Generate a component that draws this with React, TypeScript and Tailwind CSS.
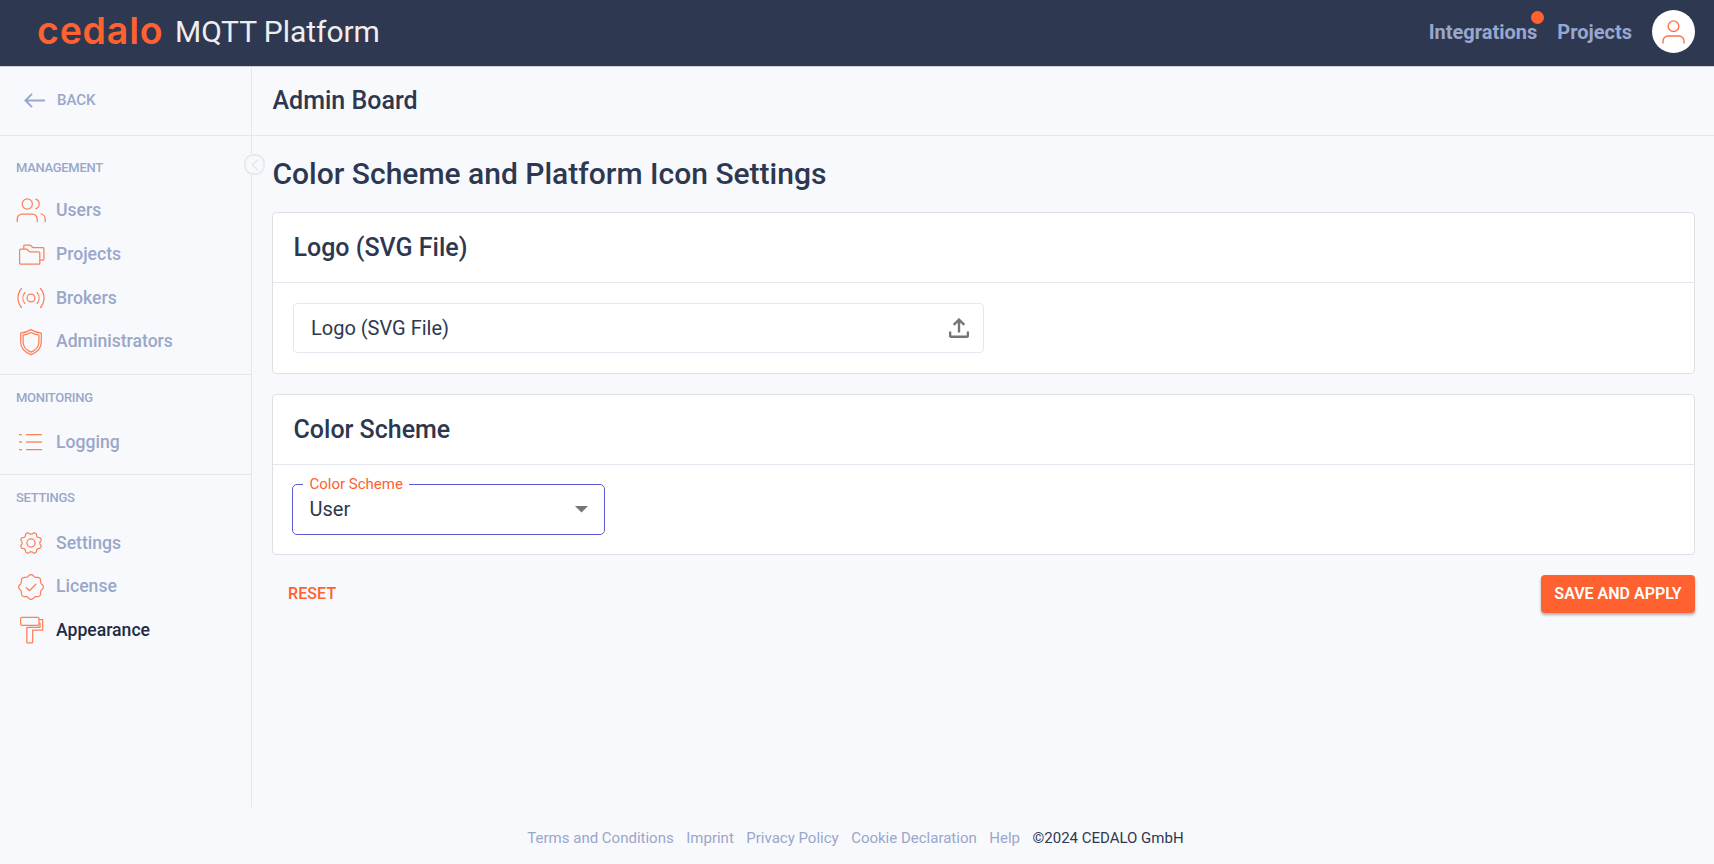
import React from "react";

const icon = "shrink-0 w-[30px] h-[30px] text-[#fc8059]";

function Svg({ children }: { children: React.ReactNode }) {
  return (
    <svg className={icon} viewBox="0 0 30 30" fill="none" stroke="currentColor" strokeWidth="1.25" strokeLinecap="round" strokeLinejoin="round">
      {children}
    </svg>
  );
}

// Closed eight-lobed outline around (15, 15); phase 0 puts a lobe at the top.
function lobes(radius: number, depth: number, phase: number, sharpness: number) {
  const points: string[] = [];
  for (let i = 0; i < 160; i++) {
    const t = (i / 160) * Math.PI * 2;
    const wave = Math.tanh(sharpness * Math.cos(8 * (t - phase))) / Math.tanh(sharpness);
    const r = radius + depth * wave;
    points.push(`${(15 + r * Math.sin(t)).toFixed(2)} ${(15 - r * Math.cos(t)).toFixed(2)}`);
  }
  return `M${points.join("L")}Z`;
}

const UsersIcon = () => (
  <Svg>
    <circle cx="11.3" cy="9" r="5.100" />
    <path d="M1.200 26.700v-2.700a5 5 0 0 1 5-5h10a5 5 0 0 1 5 5v2.700M19.800 4.200a5.100 5.100 0 0 1 0 9.600M25 19c2.500.6 4.200 2.600 4.200 5.100v2.600" />
  </Svg>
);
const ProjectsIcon = () => (
  <Svg>
    <path d="M4.500 10h6.200l3 2.900H22.900a.9.9 0 0 1 .9.9V24.200a.9.9 0 0 1-.9.9H4.500a.9.9 0 0 1-.9-.9V10.900A.9.9 0 0 1 4.500 10ZM7.800 9.800V6.900A.9.9 0 0 1 8.700 6H14l3.200 2.700H27a.9.9 0 0 1 .9.9V20.100A.9.9 0 0 1 27 21H24" />
  </Svg>
);
const BrokersIcon = () => (
  <Svg>
    <circle cx="15" cy="15" r="3.900" />
    <path d="M8.800 9.600a8.700 8.700 0 0 0 0 10.800M21.200 9.600a8.700 8.700 0 0 1 0 10.800M5.500 5.500a14.600 14.600 0 0 0 0 19M24.500 5.500a14.600 14.600 0 0 1 0 19" />
  </Svg>
);
const ShieldIcon = () => (
  <Svg>
    <path d="M15 2.600c3.500 2.100 6.500 3.200 10.300 3.500v9c0 6-3.800 10.200-10.300 12.600C8.500 25.300 4.700 21.100 4.700 15.100v-9C8.500 5.800 11.500 4.700 15 2.600Z" />
    <path d="M15 5.500c2.700 1.400 5.200 2.200 7.900 2.600v7c0 4.700-2.900 8-7.900 10-5-2-7.900-5.300-7.900-10v-7c2.700-.4 5.200-1.200 7.900-2.600Z" />
  </Svg>
);
const ListIcon = () => (
  <Svg>
    <path strokeLinecap="butt" d="M3 7.500h3M10 7.500h16M3 22.500h3M10 22.500h16" />
    <path strokeLinecap="butt" strokeWidth="2" opacity=".65" d="M3 15h3M10 15h16" />
  </Svg>
);
const GearIcon = () => (
  <Svg>
    <circle cx="15" cy="15" r="4.100" />
    <path d={lobes(9.8, 0.95, Math.PI / 8, 1.6)} />
  </Svg>
);
const BadgeIcon = () => (
  <Svg>
    <path d={lobes(11.5, 0.85, 0, 0.3)} />
    <path d="m10.300 15.700 3.100 3 6.400-6.500" />
  </Svg>
);
const RollerIcon = () => (
  <Svg>
    <rect x="4.600" y="2.300" width="18.400" height="8" rx="1.300" />
    <path d="M23 4.700h3.700v10.500H16.700M24 7.800v4.600H11.800a1 1 0 0 0-1 1" />
    <path d="M10.800 13.400v13.500a1 1 0 0 0 1 1h3.900a1 1 0 0 0 1-1V15.200" />
  </Svg>
);

function Item({ children, label, active }: { children: React.ReactNode; label: string; active?: boolean }) {
  return (
    <a className={`flex h-[43.75px] items-center pl-4 text-[17.6px] font-medium ${active ? "text-[#1f2b45]" : "text-[#99a7c9]"}`}>
      {children}
      <span className="ml-[10px]">{label}</span>
    </a>
  );
}

function Heading({ children }: { children: React.ReactNode }) {
  return <h3 className="px-4 text-[13px] leading-4 font-medium tracking-[-0.3px] text-[#99a7c9]">{children}</h3>;
}

function Card({ title, children }: { title: string; children: React.ReactNode }) {
  return (
    <section className="rounded-[4px] border border-[#dfe0e3] bg-white">
      <h2 className="flex h-[70px] items-center border-b border-[#e4e7ed] px-[20.5px] text-[25px] font-medium">{title}</h2>
      {children}
    </section>
  );
}

export default function App() {
  return (
    <div className="flex h-[864px] flex-col overflow-hidden bg-[#f8f9fd] text-[#2d3850]" style={{ fontFamily: 'Roboto, "Liberation Sans", sans-serif' }}>
      <header className="flex h-[67px] shrink-0 items-center border-b border-[#cfcfd3] bg-[#2e3850] pr-[19px] pb-[3px] pl-[37px]">
        <span className="w-[138px] pb-px text-[37.5px] leading-none font-semibold tracking-[0.8px] text-[#ff6130]" style={{ fontFamily: "Inter, sans-serif" }}>cedalo</span>
        <span className="text-[30px] leading-none tracking-[-0.05px] text-[#eeeeee]">MQTT Platform</span>
        <nav className="ml-auto flex items-center text-[20px] font-bold text-[#99a7cf]">
          <a className="relative">
            Integrations
            <i className="absolute -top-[6px] -right-[7px] h-[13px] w-[13px] rounded-full bg-[#ff6130]" />
          </a>
          <a className="ml-5">Projects</a>
          <span className="ml-5 flex h-[43px] w-[43px] items-center justify-center rounded-full bg-white">
            <svg width="23" height="24" viewBox="0 0 23 24" fill="none" stroke="#fc7349" strokeWidth="1.400">
              <circle cx="11.500" cy="6.200" r="5.300" />
              <path d="M1 23.500v-2.500a5 5 0 0 1 5-5h11a5 5 0 0 1 5 5v2.500" />
            </svg>
          </span>
        </nav>
      </header>
      <div className="flex h-[740px] shrink-0">
        <aside className="relative w-[252px] shrink-0 border-r border-[#e5e7eb]">
          <div className="flex h-[69px] items-center border-b border-[#e5e7eb] pb-px pl-6 text-[15px] font-medium text-[#99a7c9]">
            <svg width="21" height="15" viewBox="0 0 21 15" fill="none" stroke="currentColor" strokeWidth="1.900">
              <path d="M21 7.500H1.500M8 .8 1.400 7.500 8 14.200" />
            </svg>
            <span className="ml-3">BACK</span>
          </div>
          <div className="h-[239px] border-b border-[#e5e7eb] pt-6">
            <Heading>MANAGEMENT</Heading>
            <div className="pt-[12.5px]">
              <Item label="Users"><UsersIcon /></Item>
              <Item label="Projects"><ProjectsIcon /></Item>
              <Item label="Brokers"><BrokersIcon /></Item>
              <Item label="Administrators"><ShieldIcon /></Item>
            </div>
          </div>
          <div className="h-[100px] border-b border-[#e5e7eb] pt-[15px]">
            <Heading>MONITORING</Heading>
            <div className="pt-[14px]">
              <Item label="Logging"><ListIcon /></Item>
            </div>
          </div>
          <div className="pt-[15px]">
            <Heading>SETTINGS</Heading>
            <div className="pt-[15px]">
              <Item label="Settings"><GearIcon /></Item>
              <Item label="License"><BadgeIcon /></Item>
              <Item label="Appearance" active><RollerIcon /></Item>
            </div>
          </div>
          <button className="absolute top-[87px] -right-[14px] flex h-[21px] w-[21px] items-center justify-center rounded-[9px] border-2 border-[#e7e9ed] bg-[#f8f9fd]">
            <svg width="8" height="12" viewBox="0 0 8 12" fill="none" stroke="#e2e4e9" strokeWidth="1.300"><path d="M7 .5 1.200 6 7 11.500" /></svg>
          </button>
        </aside>
        <main className="min-w-0 flex-1">
          <div className="flex h-[69px] items-center border-b border-[#e5e7eb] pl-[20.5px] text-[25px] font-medium">Admin Board</div>
          <div className="pr-[19px] pl-5">
            <h1 className="flex h-[76px] items-center pb-[2px] pl-[0.5px] text-[30px] font-medium">Color Scheme and Platform Icon Settings</h1>
            <Card title="Logo (SVG File)">
              <div className="px-5 py-5">
                <div className="flex h-[50px] w-[691px] items-center justify-between rounded-[4px] border border-[#e6e8ef] pr-[14px] pl-[17px] text-[20px]">
                  Logo (SVG File)
                  <svg width="20" height="20" viewBox="0 0 20 20" fill="none" stroke="#757575" strokeWidth="2.400"><path d="M10 14.500V2M4.700 6.800 10 1.600l5.300 5.200M1.100 13.500v4.200a1 1 0 0 0 1 1h15.800a1 1 0 0 0 1-1v-4.200" /></svg>
                </div>
              </div>
            </Card>
            <div className="h-5" />
            <Card title="Color Scheme">
              <div className="px-[19px] pt-[19px] pb-[19px]">
                <div className="relative flex h-[51px] w-[313px] items-center justify-between rounded-[5px] border border-[#5b5bd6] pr-[16.5px] pb-px pl-[16.5px] text-[20px]">
                  <span className="absolute -top-[11px] left-[10px] bg-white pr-[6.5px] pl-[6.5px] text-[15px] leading-5 text-[#ff6130]">Color Scheme</span>
                  User
                  <svg width="13" height="7" viewBox="0 0 13 7"><path d="M0 0h13L6.500 6.500Z" fill="#757575" /></svg>
                </div>
              </div>
            </Card>
            <div className="flex items-center justify-between pt-5 text-[16px] font-medium">
              <button className="pb-px pl-4 tracking-[0.1px] text-[#ff6130]">RESET</button>
              <button className="h-[38px] w-[154px] rounded-[4px] bg-[#ff6130] pb-px font-semibold text-white shadow-[0_2px_3px_rgba(0,0,0,0.3)]">SAVE AND APPLY</button>
            </div>
          </div>
        </main>
      </div>
      <footer className="flex flex-1 items-center justify-center gap-[12.5px] pt-[5px] pr-[3px] text-[15px] text-[#99a7c9]">
        <a>Terms and Conditions</a>
        <a>Imprint</a>
        <a>Privacy Policy</a>
        <a>Cookie Declaration</a>
        <a>Help</a>
        <span className="text-[#2d3850]">©2024 CEDALO GmbH</span>
      </footer>
    </div>
  );
}
